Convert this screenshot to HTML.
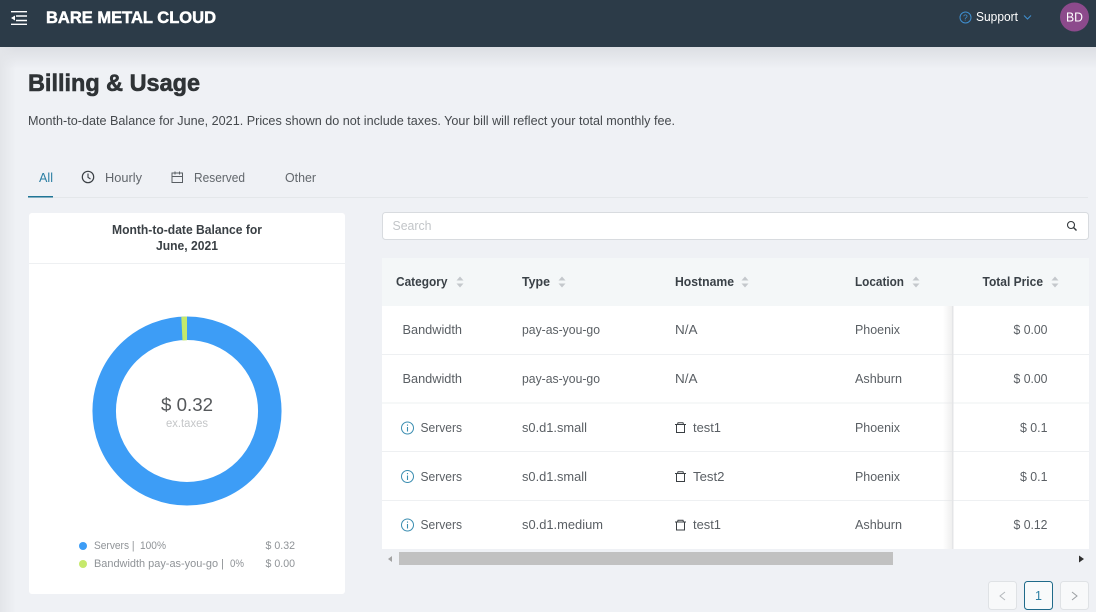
<!DOCTYPE html>
<html lang="en">
<head>
<meta charset="utf-8">
<title>Billing &amp; Usage</title>
<style>
html,body{margin:0;padding:0;width:1096px;height:612px;overflow:hidden;background:#eff1f5}
svg{display:block;position:absolute;left:0;top:0}
text{font-family:"Liberation Sans",sans-serif;font-size:13px;fill:#4a4f54;white-space:pre}
.b{font-weight:bold;fill:#3a4045}
.r{fill:#5a5f64;font-size:12.8px}
.h{font-weight:bold;fill:#3a4147;font-size:12.5px}
.l{font-size:10.8px;fill:#8f9397}
</style>
</head>
<body>
<svg width="1096" height="612" viewBox="0 0 1096 612" xmlns="http://www.w3.org/2000/svg">
<defs>
<linearGradient id="top" x1="0" y1="0" x2="0" y2="1"><stop offset="0" stop-color="#dcdee3"/><stop offset="1" stop-color="#dcdee3" stop-opacity="0"/></linearGradient>
<linearGradient id="left" x1="0" y1="0" x2="1" y2="0"><stop offset="0" stop-color="#e3e5e9"/><stop offset="1" stop-color="#e3e5e9" stop-opacity="0"/></linearGradient>
<linearGradient id="fix" x1="0" y1="0" x2="1" y2="0"><stop offset="0" stop-color="#e2e2e2" stop-opacity="0"/><stop offset="1" stop-color="#e2e2e2"/></linearGradient>
<g id="sort"><path d="M-3.500-1.500 0-5.500 3.500-1.500Z M-3.500 1.500 0 5.500 3.500 1.500Z" fill="#c4c8cc"/></g>
<g id="info" fill="none" stroke="#3a8db0" stroke-width="1"><circle cx="0" cy="0" r="6"/><path d="M0-1V3.500" stroke-width="1.100"/><path d="M0-3.500V-2.300" stroke-width="1.100"/></g>
<g id="trash" fill="none" stroke="#3a3f43" stroke-width="1"><path d="M-5.500-3H5.500M-3-3 -2.500-4.800H2.500L3-3M-4-3V5H4V-3"/></g>
</defs>

<rect width="1096" height="612" fill="#eff1f5"/>
<rect x="0" y="47" width="1096" height="22" fill="url(#top)"/>
<rect x="0" y="47" width="16" height="565" fill="url(#left)"/>

<!-- Header -->
<rect width="1096" height="47" fill="#2c3b48"/>
<path d="M11 11.700H27M16 16H27M16 20.500H27M11 24.300H27" stroke="#fff" stroke-width="1.400" fill="none"/>
<path d="M15 15.500 11 18 15 20.500Z" fill="#fff"/>
<text x="46" y="23" style="font-size:17px;font-weight:bold;fill:#fff;stroke:#fff;stroke-width:.5px" textLength="170" lengthAdjust="spacingAndGlyphs">BARE METAL CLOUD</text>
<circle cx="965.500" cy="17.500" r="5.500" fill="none" stroke="#3f8fd0" stroke-width="1"/>
<text x="963" y="20.500" style="font-size:8.500px;fill:#3f8fd0">?</text>
<text x="976" y="21" style="font-size:12.500px;fill:#fff" textLength="42" lengthAdjust="spacingAndGlyphs">Support</text>
<path d="M1024 15.500 1027.500 19 1031 15.500" fill="none" stroke="#3f8fd0" stroke-width="1"/>
<circle cx="1074.500" cy="17" r="14.500" fill="#8c4a8c"/>
<text x="1066" y="21.500" style="font-size:12.500px;fill:#fff" textLength="17" lengthAdjust="spacingAndGlyphs">BD</text>

<!-- Title -->
<text x="28" y="91" style="font-size:24px;font-weight:bold;fill:#2f3336;stroke:#2f3336;stroke-width:.6px" textLength="172" lengthAdjust="spacingAndGlyphs">Billing &amp; Usage</text>
<text x="28" y="125" style="font-size:13px;fill:#45494d" textLength="647" lengthAdjust="spacingAndGlyphs">Month-to-date Balance for June, 2021. Prices shown do not include taxes. Your bill will reflect your total monthly fee.</text>

<!-- Tabs -->
<rect x="28" y="197" width="1060" height="1" fill="#e4e7ea"/>
<rect x="28" y="196" width="25" height="1.500" fill="#1f7596"/>
<text x="39" y="182" style="font-size:12.500px;fill:#2a7ea3" textLength="14" lengthAdjust="spacingAndGlyphs">All</text>
<circle cx="88" cy="177" r="5.700" fill="none" stroke="#3a3f44" stroke-width="1.200"/>
<path d="M88 173.500V177.300L90.500 179" fill="none" stroke="#3a3f44" stroke-width="1.100"/>
<text x="105" y="182" style="font-size:12.500px;fill:#62676c" textLength="37" lengthAdjust="spacingAndGlyphs">Hourly</text>
<path d="M172 173H182.500V182.500H172ZM172 176.500H182.500M175 171.500V174.500M179.500 171.500V174.500" fill="none" stroke="#595e63" stroke-width="1"/>
<text x="194" y="182" style="font-size:12.500px;fill:#62676c" textLength="51" lengthAdjust="spacingAndGlyphs">Reserved</text>
<text x="285" y="182" style="font-size:12.500px;fill:#62676c" textLength="31" lengthAdjust="spacingAndGlyphs">Other</text>

<!-- Card -->
<rect x="29" y="213" width="316" height="381" rx="3" fill="#fff"/>
<rect x="29" y="263" width="316" height="1" fill="#eef0f2"/>
<text x="112" y="234" class="b" style="font-size:12.500px" textLength="150" lengthAdjust="spacingAndGlyphs">Month-to-date Balance for</text>
<text x="156" y="250" class="b" style="font-size:12.500px" textLength="62" lengthAdjust="spacingAndGlyphs">June, 2021</text>
<circle cx="187" cy="411" r="82.800" fill="none" stroke="#3d9df6" stroke-width="23.500"/>
<path d="M181.300 316.700 187 316.500V340.300L182.500 340.500Z" fill="#c6e96c"/>
<text x="161" y="411" style="font-size:18.500px;fill:#55585b" textLength="52" lengthAdjust="spacingAndGlyphs">$ 0.32</text>
<text x="166" y="427" style="font-size:11.500px;fill:#c4c6c8" textLength="42" lengthAdjust="spacingAndGlyphs">ex.taxes</text>
<circle cx="83" cy="546" r="4" fill="#3d9df6"/>
<circle cx="83" cy="564" r="4" fill="#c6e96c"/>
<text x="94" y="549" class="l" textLength="40.500" lengthAdjust="spacingAndGlyphs">Servers |</text>
<text x="140" y="549" class="l" textLength="26" lengthAdjust="spacingAndGlyphs">100%</text>
<text x="94" y="567" class="l" textLength="130" lengthAdjust="spacingAndGlyphs">Bandwidth pay-as-you-go |</text>
<text x="230" y="567" class="l" textLength="14" lengthAdjust="spacingAndGlyphs">0%</text>
<text x="265.500" y="549" class="l" textLength="29.500" lengthAdjust="spacingAndGlyphs">$ 0.32</text>
<text x="265.500" y="567" class="l" textLength="29.500" lengthAdjust="spacingAndGlyphs">$ 0.00</text>

<!-- Search -->
<rect x="382.500" y="212.500" width="706" height="27" rx="3" fill="#fff" stroke="#d8dbdf"/>
<text x="392.500" y="230" style="font-size:12.500px;fill:#c2c5c8" textLength="39" lengthAdjust="spacingAndGlyphs">Search</text>
<circle cx="1071" cy="225" r="3.500" fill="none" stroke="#33383c" stroke-width="1.100"/>
<path d="M1073.500 227.500 1076.500 230.500" stroke="#33383c" stroke-width="1.400"/>

<!-- Table -->
<rect x="382" y="258" width="707" height="48" fill="#f4f7f8"/>
<rect x="382" y="306" width="707" height="243" fill="#fff"/>
<g fill="#eef0f2">
<rect x="382" y="354" width="707" height="1"/>
<rect x="382" y="402.500" width="707" height="1"/>
<rect x="382" y="451" width="707" height="1"/>
<rect x="382" y="500" width="707" height="1"/>
</g>
<rect x="943" y="306" width="9" height="243" fill="url(#fix)" opacity=".55"/>
<rect x="952" y="306" width="1.500" height="243" fill="#e4e5e7"/>

<text x="396" y="286" class="h" textLength="51.500" lengthAdjust="spacingAndGlyphs">Category</text>
<use href="#sort" x="460" y="282"/>
<text x="522" y="286" class="h" textLength="28" lengthAdjust="spacingAndGlyphs">Type</text>
<use href="#sort" x="562" y="282"/>
<text x="675" y="286" class="h" textLength="59" lengthAdjust="spacingAndGlyphs">Hostname</text>
<use href="#sort" x="745" y="282"/>
<text x="855" y="286" class="h" textLength="49" lengthAdjust="spacingAndGlyphs">Location</text>
<use href="#sort" x="916" y="282"/>
<text x="982.500" y="286" class="h" textLength="60.500" lengthAdjust="spacingAndGlyphs">Total Price</text>
<use href="#sort" x="1055" y="282"/>

<!-- Row 1 -->
<text x="402.500" y="334" class="r" textLength="59.500" lengthAdjust="spacingAndGlyphs">Bandwidth</text>
<text x="522" y="334" class="r" textLength="78" lengthAdjust="spacingAndGlyphs">pay-as-you-go</text>
<text x="675" y="334" class="r" textLength="22.500" lengthAdjust="spacingAndGlyphs">N/A</text>
<text x="855" y="334" class="r" textLength="45" lengthAdjust="spacingAndGlyphs">Phoenix</text>
<text x="1013.500" y="334" class="r" textLength="34" lengthAdjust="spacingAndGlyphs">$ 0.00</text>
<!-- Row 2 -->
<text x="402.500" y="383" class="r" textLength="59.500" lengthAdjust="spacingAndGlyphs">Bandwidth</text>
<text x="522" y="383" class="r" textLength="78" lengthAdjust="spacingAndGlyphs">pay-as-you-go</text>
<text x="675" y="383" class="r" textLength="22.500" lengthAdjust="spacingAndGlyphs">N/A</text>
<text x="855" y="383" class="r" textLength="47" lengthAdjust="spacingAndGlyphs">Ashburn</text>
<text x="1013.500" y="383" class="r" textLength="34" lengthAdjust="spacingAndGlyphs">$ 0.00</text>
<!-- Row 3 -->
<use href="#info" x="407.500" y="428"/>
<text x="420.500" y="432" class="r" textLength="41.500" lengthAdjust="spacingAndGlyphs">Servers</text>
<text x="522" y="432" class="r" textLength="65" lengthAdjust="spacingAndGlyphs">s0.d1.small</text>
<use href="#trash" x="680.500" y="427.500"/>
<text x="693" y="432" class="r" textLength="28" lengthAdjust="spacingAndGlyphs">test1</text>
<text x="855" y="432" class="r" textLength="45" lengthAdjust="spacingAndGlyphs">Phoenix</text>
<text x="1020" y="432" class="r" textLength="27.500" lengthAdjust="spacingAndGlyphs">$ 0.1</text>
<!-- Row 4 -->
<use href="#info" x="407.500" y="476.500"/>
<text x="420.500" y="481" class="r" textLength="41.500" lengthAdjust="spacingAndGlyphs">Servers</text>
<text x="522" y="481" class="r" textLength="65" lengthAdjust="spacingAndGlyphs">s0.d1.small</text>
<use href="#trash" x="680.500" y="476.500"/>
<text x="693" y="481" class="r" textLength="31.500" lengthAdjust="spacingAndGlyphs">Test2</text>
<text x="855" y="481" class="r" textLength="45" lengthAdjust="spacingAndGlyphs">Phoenix</text>
<text x="1020" y="481" class="r" textLength="27.500" lengthAdjust="spacingAndGlyphs">$ 0.1</text>
<!-- Row 5 -->
<use href="#info" x="407.500" y="525"/>
<text x="420.500" y="529" class="r" textLength="41.500" lengthAdjust="spacingAndGlyphs">Servers</text>
<text x="522" y="529" class="r" textLength="81" lengthAdjust="spacingAndGlyphs">s0.d1.medium</text>
<use href="#trash" x="680.500" y="525"/>
<text x="693" y="529" class="r" textLength="28" lengthAdjust="spacingAndGlyphs">test1</text>
<text x="855" y="529" class="r" textLength="47" lengthAdjust="spacingAndGlyphs">Ashburn</text>
<text x="1013.500" y="529" class="r" textLength="34" lengthAdjust="spacingAndGlyphs">$ 0.12</text>

<!-- Scrollbar -->
<rect x="399" y="552" width="494" height="13" fill="#c1c1c1"/>
<path d="M392 556 388 559 392 562Z" fill="#a3a3a3"/>
<path d="M1079 555.500 1084 559 1079 562.500Z" fill="#2f2f2f"/>

<!-- Pagination -->
<rect x="988.500" y="581.500" width="28" height="28" rx="3" fill="#f8f9fa" stroke="#dfe2e5"/>
<path d="M1005 592 1000 596 1005 600" fill="none" stroke="#b4b8bc" stroke-width="1"/>
<rect x="1024.500" y="581.500" width="28" height="28" rx="3" fill="#f8fafb" stroke="#1f6a8a"/>
<text x="1035" y="600" style="font-size:12.500px;fill:#2a7ea3">1</text>
<rect x="1060.500" y="581.500" width="28" height="28" rx="3" fill="#f8f9fa" stroke="#dfe2e5"/>
<path d="M1072 592 1077 596 1072 600" fill="none" stroke="#9a9ea2" stroke-width="1"/>
</svg>
</body>
</html>
